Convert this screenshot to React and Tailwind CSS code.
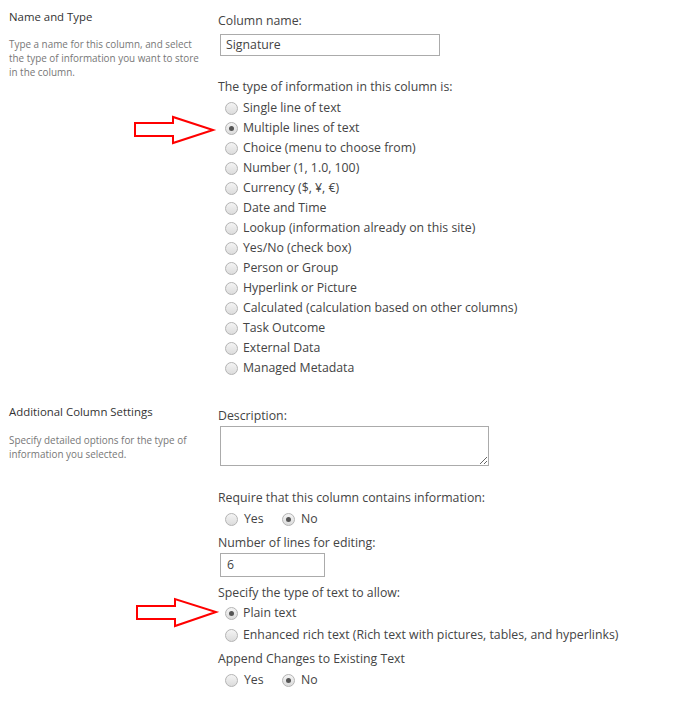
import React from 'react';

const font = { fontFamily: '"Open Sans", "Liberation Sans", sans-serif' };

function Radio({ checked }) {
  return (
    <span className="relative inline-flex h-[13px] w-[13px] shrink-0 items-center justify-center rounded-full border border-[#b4b4b4] bg-gradient-to-b from-[#f4f4f4] to-[#dcdcdc]">
      {checked && <span className="h-[5px] w-[5px] rounded-full bg-[#555]" />}
    </span>
  );
}

function Option({ label, checked, children }) {
  return (
    <div className="relative flex h-5 items-center pl-[7px]">
      <Radio checked={checked} />
      <span className="ml-[5px] text-[12.3px] text-[#444]">{label}</span>
      {children}
    </div>
  );
}

function Arrow({ points, className }) {
  return (
    <svg className={`absolute ${className}`} width="84" height="32" viewBox="0 0 84 32" fill="none">
      <polygon points={points} fill="#fff" stroke="#ff0000" strokeWidth="2" />
    </svg>
  );
}

function Label({ children, className = '' }) {
  return <div className={`h-5 leading-5 text-[12.3px] text-[#444] ${className}`}>{children}</div>;
}

const types = [
  'Single line of text',
  'Multiple lines of text',
  'Choice (menu to choose from)',
  'Number (1, 1.0, 100)',
  'Currency ($, ¥, €)',
  'Date and Time',
  'Lookup (information already on this site)',
  'Yes/No (check box)',
  'Person or Group',
  'Hyperlink or Picture',
  'Calculated (calculation based on other columns)',
  'Task Outcome',
  'External Data',
  'Managed Metadata',
];

function YesNo() {
  return (
    <div className="flex h-5 items-center pl-[7px] text-[12.3px] text-[#444]">
      <Radio />
      <span className="ml-[6px] w-[38px]">Yes</span>
      <Radio checked />
      <span className="ml-[6px]">No</span>
    </div>
  );
}

export default function App() {
  return (
    <div className="h-[705px] w-[688px] overflow-hidden bg-white" style={font}>
      {/* Name and Type */}
      <section className="flex">
        <div className="w-[218px] shrink-0 pl-[9px] pt-[7px]">
          <div className="h-5 leading-5 text-[11.4px] text-[#333]">Name and Type</div>
          <p className="mt-[10px] w-[195px] text-[9.9px] leading-[14px] text-[#777]">
            Type a name for this column, and select the type of information you want to store in the column.
          </p>
        </div>
        <div className="pt-[11px]">
          <Label>Column name:</Label>
          <input
            readOnly
            value="Signature"
            className="mt-px ml-[2px] h-[22px] w-[220px] border border-[#ababab] px-[5px] text-[12.3px] text-[#444] outline-none"
          />
          <Label className="mt-[21px]">The type of information in this column is:</Label>
          <div className="mt-[2px]">
            {types.map((t, i) => (
              <Option key={t} label={t} checked={i === 1}>
                {i === 1 && (
                  <Arrow className="left-[-84px] top-[-4px]" points="1,8 39,8 39,2 79,15 39,28 39,21 1,21" />
                )}
              </Option>
            ))}
          </div>
        </div>
      </section>

      {/* Additional Column Settings */}
      <section className="mt-[23px] flex">
        <div className="w-[218px] shrink-0 pl-[9px]">
          <div className="h-5 leading-5 text-[11.4px] text-[#333]">Additional Column Settings</div>
          <p className="mt-[11px] w-[195px] text-[9.9px] leading-[14px] text-[#777]">
            Specify detailed options for the type of information you selected.
          </p>
        </div>
        <div className="pt-1">
          <Label>Description:</Label>
          <textarea
            readOnly
            className="ml-[2px] block h-10 w-[269px] border border-[#ababab] outline-none"
          />
          <Label className="mt-[22px]">Require that this column contains information:</Label>
          <div className="mt-[2px]">
            <YesNo />
          </div>
          <Label className="mt-[3px]">Number of lines for editing:</Label>
          <input
            readOnly
            value="6"
            className="ml-[2px] block h-6 w-[105px] border border-[#ababab] px-[6px] text-[12.3px] text-[#444] outline-none"
          />
          <Label className="mt-[6px]">Specify the type of text to allow:</Label>
          <div className="mt-px">
            <Option label="Plain text" checked>
              <Arrow className="left-[-82px] top-[-7px]" points="1,9 39,9 39,2 80,15 39,29 39,22 1,22" />
            </Option>
            <div className="mt-[2px]">
              <Option label="Enhanced rich text (Rich text with pictures, tables, and hyperlinks)" />
            </div>
          </div>
          <Label className="mt-[3px]">Append Changes to Existing Text</Label>
          <div className="mt-[2px]">
            <YesNo />
          </div>
        </div>
      </section>
    </div>
  );
}
